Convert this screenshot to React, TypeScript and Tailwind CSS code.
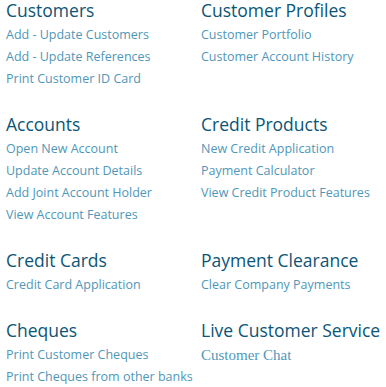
import React from 'react';

interface Section {
  title: string;
  links: string[];
  serif?: boolean;
}

const rows: [Section, Section][] = [
  [
    { title: 'Customers', links: ['Add - Update Customers', 'Add - Update References', 'Print Customer ID Card'] },
    { title: 'Customer Profiles', links: ['Customer Portfolio', 'Customer Account History'] },
  ],
  [
    {
      title: 'Accounts',
      links: ['Open New Account', 'Update Account Details', 'Add Joint Account Holder', 'View Account Features'],
    },
    {
      title: 'Credit Products',
      links: ['New Credit Application', 'Payment Calculator', 'View Credit Product Features'],
    },
  ],
  [
    { title: 'Credit Cards', links: ['Credit Card Application'] },
    { title: 'Payment Clearance', links: ['Clear Company Payments'] },
  ],
  [
    { title: 'Cheques', links: ['Print Customer Cheques', 'Print Cheques from other banks'] },
    { title: 'Live Customer Service', links: ['Customer Chat'], serif: true },
  ],
];

function MenuSection({ section }: { section: Section }) {
  return (
    <div>
      <h3 className="text-[17.5px] leading-[20px] mb-[4px] text-[#0b5575] font-normal">{section.title}</h3>
      <ul>
        {section.links.map((link) => (
          <li
            key={link}
            className={
              section.serif
                ? "text-[15px] leading-[22px] font-['Liberation_Serif',serif]"
                : 'text-[12.5px] leading-[22px]'
            }
          >
            <a href="#" className="text-[#4f97b8]">
              {link}
            </a>
          </li>
        ))}
      </ul>
    </div>
  );
}

export default function App() {
  return (
    <div className="bg-white min-h-screen pl-[6px] font-['Open_Sans',sans-serif]">
      <div className="flex flex-col gap-[24px]">
        {rows.map(([left, right]) => (
          <div key={left.title} className="grid grid-cols-[195px_1fr]">
            <MenuSection section={left} />
            <MenuSection section={right} />
          </div>
        ))}
      </div>
    </div>
  );
}
